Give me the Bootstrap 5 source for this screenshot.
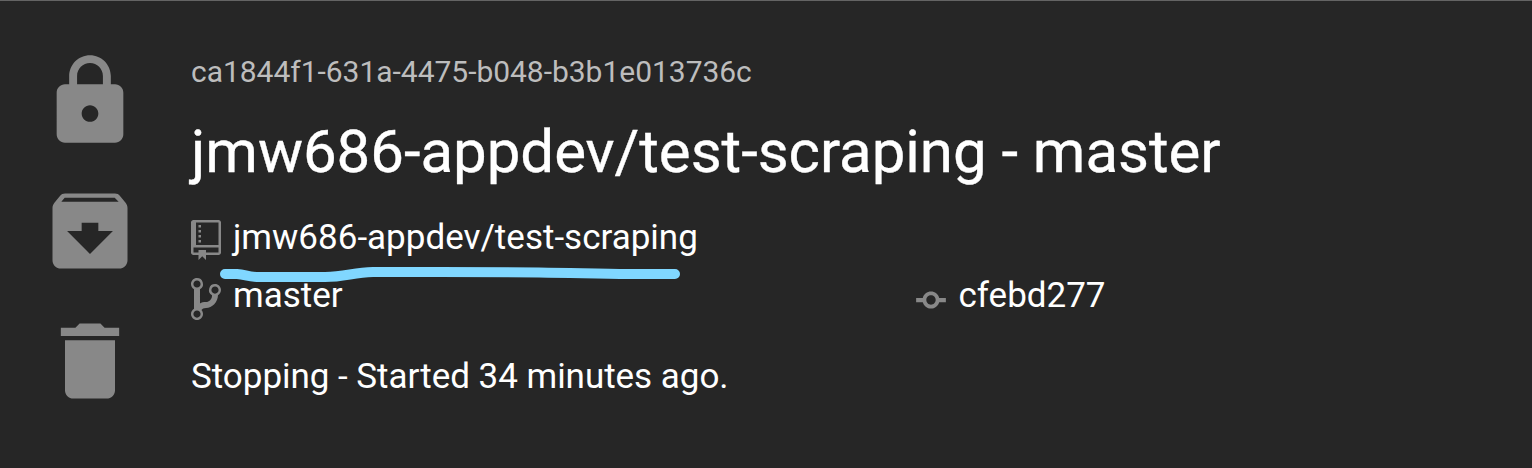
<!DOCTYPE html>
<html lang="en">
<head>
<meta charset="utf-8">
<meta name="viewport" content="width=device-width, initial-scale=1">
<title>Workspace</title>
<link href="https://cdn.jsdelivr.net/npm/bootstrap@5.3.0/dist/css/bootstrap.min.css" rel="stylesheet">
<style>
body{background:#262626;color:#fff;font-family:Roboto,"Liberation Sans",sans-serif;overflow:hidden}
.workspace{height:468px;border-top:1px solid #646464;padding-left:40px}
.actions{gap:30px;padding-top:50px;width:100px;color:#888}
.action{background:none;border:0;padding:0;color:inherit;line-height:0}
.info{padding:51px 0 0 51px}
.ws-id{font-size:30px;line-height:40px;color:#bdbdbd;letter-spacing:-.03px}
.ws-title{font-size:60px;line-height:80px;font-weight:400;margin:20px 0 17px;letter-spacing:-.045px;-webkit-text-stroke:.35px #fff}
.line{font-size:35px;line-height:58px;white-space:nowrap}
.line svg{color:#888;margin-right:12px;flex:none}
.line .repo-icon{margin-top:4px}
.line .branch-icon{margin-top:6px}
.line .commit-icon{margin:8px 12.5px 0 0}
.branch-cell{width:725px}
.status{margin-top:23px;letter-spacing:-.03px}
.stroke-mark{left:27.5px;top:56px;pointer-events:none}
</style>
</head>
<body>
<main class="workspace d-flex">
  <div class="actions d-flex flex-column flex-shrink-0">
    <button class="action" aria-label="Lock"><svg width="100" height="100" viewBox="0 0 24 24" fill="currentColor"><path d="M18 8h-1V6c0-2.76-2.24-5-5-5S7 3.24 7 6v2H6c-1.1 0-2 .9-2 2v10c0 1.1.9 2 2 2h12c1.1 0 2-.9 2-2V10c0-1.1-.9-2-2-2zm-6 9c-1.1 0-2-.9-2-2s.9-2 2-2 2 .9 2 2-.9 2-2 2zm3.1-9H8.9V6c0-1.71 1.39-3.1 3.1-3.1 1.71 0 3.1 1.39 3.1 3.1v2z"/></svg></button>
    <button class="action" aria-label="Archive"><svg width="100" height="100" viewBox="0 0 24 24" fill="currentColor"><path d="M20.54 5.23l-1.39-1.68C18.88 3.21 18.47 3 18 3H6c-.47 0-.88.21-1.16.55L3.46 5.23C3.17 5.57 3 6.02 3 6.5V19c0 1.1.9 2 2 2h14c1.1 0 2-.9 2-2V6.5c0-.48-.17-.93-.46-1.27zM12 17.5L6.5 12H10v-2h4v2h3.5L12 17.5zM5.12 5l.81-1h12l.94 1H5.12z"/></svg></button>
    <button class="action" aria-label="Delete"><svg width="100" height="100" viewBox="0 0 24 24" fill="currentColor"><path d="M6 19c0 1.1.9 2 2 2h8c1.1 0 2-.9 2-2V7H6v12zM19 4h-3.5l-1-1h-5l-1 1H5v2h14V4z"/></svg></button>
  </div>
  <div class="info">
    <div class="ws-id">ca1844f1-631a-4475-b048-b3b1e013736c</div>
    <h1 class="ws-title text-nowrap">jmw686-appdev/test-scraping - master</h1>
    <div class="line d-flex align-items-center position-relative">
      <svg class="repo-icon" width="30" height="40" viewBox="0 0 12 16" fill="currentColor"><path fill-rule="evenodd" d="M4 9H3V8h1v1zm0-3H3v1h1V6zm0-2H3v1h1V4zm0-2H3v1h1V2zm8-1v12c0 .55-.45 1-1 1H6v2l-1.5-1.5L3 16v-2H1c-.55 0-1-.45-1-1V1c0-.55.45-1 1-1h10c.55 0 1 .45 1 1zm-1 10H1v2h2v-1h3v1h5v-2zm0-10H2v9h9V1z"/></svg>
      <span>jmw686-appdev/test-scraping</span>
      <!-- hand-drawn highlight under the repository name -->
      <svg class="stroke-mark position-absolute m-0" width="466" height="22" viewBox="0 0 466 22" fill="none" stroke="#80d7ff" stroke-width="10" stroke-linecap="round" stroke-linejoin="round"><path d="M6 9H18C27 9.500 28 12 40 12H106C126 12 134 7.500 154 7H220C270 7.500 300 7.500 320 7.500C360 8 380 9 410 9H456"/></svg>
    </div>
    <div class="line d-flex align-items-center">
      <div class="branch-cell d-flex align-items-center flex-shrink-0">
        <svg class="branch-icon" width="30" height="48" viewBox="0 0 10 16" fill="currentColor"><path fill-rule="evenodd" d="M10 5c0-1.11-.89-2-2-2a1.993 1.993 0 00-1 3.72v.3c-.02.52-.23.98-.63 1.38-.4.4-.86.61-1.38.63-.83.02-1.48.16-2 .45V4.72a1.993 1.993 0 00-1-3.72C.88 1 0 1.89 0 3a2 2 0 001 1.72v6.56c-.59.35-1 .99-1 1.72 0 1.11.89 2 2 2 1.11 0 2-.89 2-2 0-.53-.2-1-.53-1.36.09-.06.48-.41.59-.47.25-.11.56-.17.94-.17 1.05-.05 1.95-.45 2.75-1.25S8.95 7.77 9 6.73h-.02C9.59 6.37 10 5.73 10 5zM2 1.8c.66 0 1.2.55 1.2 1.2 0 .65-.55 1.2-1.2 1.2C1.35 4.2.8 3.65.8 3c0-.65.55-1.2 1.2-1.2zm0 12.41c-.66 0-1.2-.55-1.2-1.2 0-.65.55-1.2 1.2-1.2.65 0 1.2.55 1.2 1.2 0 .65-.55 1.2-1.2 1.2zm6-8c-.66 0-1.2-.55-1.2-1.2 0-.65.55-1.2 1.2-1.2.65 0 1.2.55 1.2 1.2 0 .65-.55 1.2-1.2 1.2z"/></svg>
        <span>master</span>
      </div>
      <svg class="commit-icon" width="30" height="34" viewBox="0 0 14 16" fill="currentColor"><path fill-rule="evenodd" d="M10.860 7c-.45-1.720-2-3-3.860-3-1.860 0-3.410 1.280-3.860 3H0v2h3.140c.45 1.720 2 3 3.860 3 1.860 0 3.410-1.280 3.860-3H14V7h-3.140zM7 10.200c-1.220 0-2.200-.98-2.200-2.200 0-1.220.98-2.200 2.200-2.200 1.220 0 2.200.98 2.200 2.200 0 1.220-.98 2.200-2.200 2.200z"/></svg>
      <span>cfebd277</span>
    </div>
    <div class="line status">Stopping - Started 34 minutes ago.</div>
  </div>
</main>
<script src="https://cdn.jsdelivr.net/npm/bootstrap@5.3.0/dist/js/bootstrap.bundle.min.js"></script>
</body>
</html>
